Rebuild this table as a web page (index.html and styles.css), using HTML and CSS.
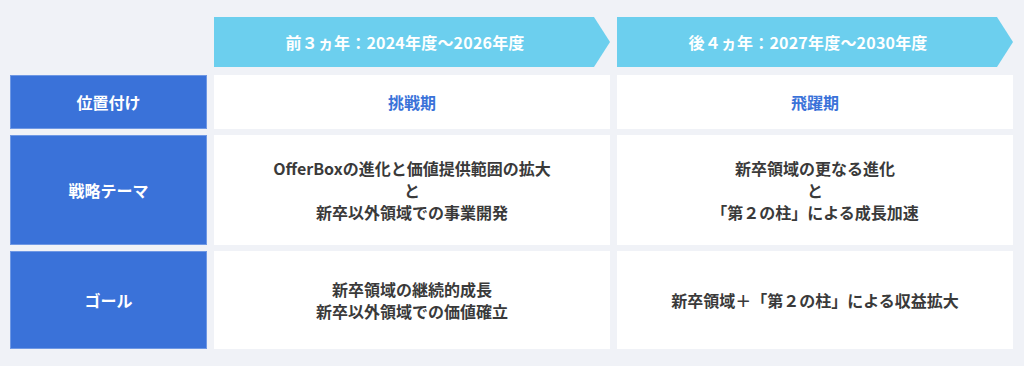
FILE: index.html
```html
<!DOCTYPE html>
<html lang="ja">
<head>
<meta charset="utf-8">
<title>中期計画</title>
<link rel="stylesheet" href="styles.css">
</head>
<body>
<div class="board">
  <div class="corner"></div>
  <div class="phase">前３ヵ年：2024年度〜2026年度</div>
  <div class="phase">後４ヵ年：2027年度〜2030年度</div>

  <div class="label">位置付け</div>
  <div class="cell accent">挑戦期</div>
  <div class="cell accent">飛躍期</div>

  <div class="label">戦略テーマ</div>
  <div class="cell">OfferBoxの進化と価値提供範囲の拡大<br>と<br>新卒以外領域での事業開発</div>
  <div class="cell">新卒領域の更なる進化<br>と<br>「第２の柱」による成長加速</div>

  <div class="label">ゴール</div>
  <div class="cell">新卒領域の継続的成長<br>新卒以外領域での価値確立</div>
  <div class="cell">新卒領域＋「第２の柱」による収益拡大</div>
</div>
</body>
</html>
```

FILE: styles.css
```css
html, body {
  margin: 0;
  padding: 0;
  background: #f0f2f7;
}

body {
  font-family: "Noto Sans CJK JP", "Noto Sans", sans-serif;
  width: 1024px;
  height: 366px;
  overflow: hidden;
}

.board {
  display: grid;
  grid-template-columns: 197px 396px 396px;
  grid-template-rows: 52px 54px 110px 98px;
  column-gap: 7px;
  row-gap: 6px;
  padding: 17px 0 0 10px;
}

.corner {
  margin-bottom: 2px;
}

.phase {
  margin-bottom: 2px;
  background: #6ccfee;
  color: #ffffff;
  font-weight: 700;
  font-size: 16px;
  letter-spacing: 0.2px;
  display: flex;
  align-items: center;
  justify-content: center;
  padding-right: 14px;
  clip-path: polygon(0 0, calc(100% - 16px) 0, 100% 50%, calc(100% - 16px) 100%, 0 100%);
}

.label {
  background: #3a72d9;
  border: 1px solid #6f98e4;
  color: #ffffff;
  font-weight: 700;
  font-size: 16px;
  display: flex;
  align-items: center;
  justify-content: center;
}

.cell {
  background: #ffffff;
  color: #3a3a3a;
  font-weight: 700;
  font-size: 16px;
  line-height: 22px;
  text-align: center;
  display: flex;
  align-items: center;
  justify-content: center;
}

.accent {
  color: #3a72d9;
}
```
